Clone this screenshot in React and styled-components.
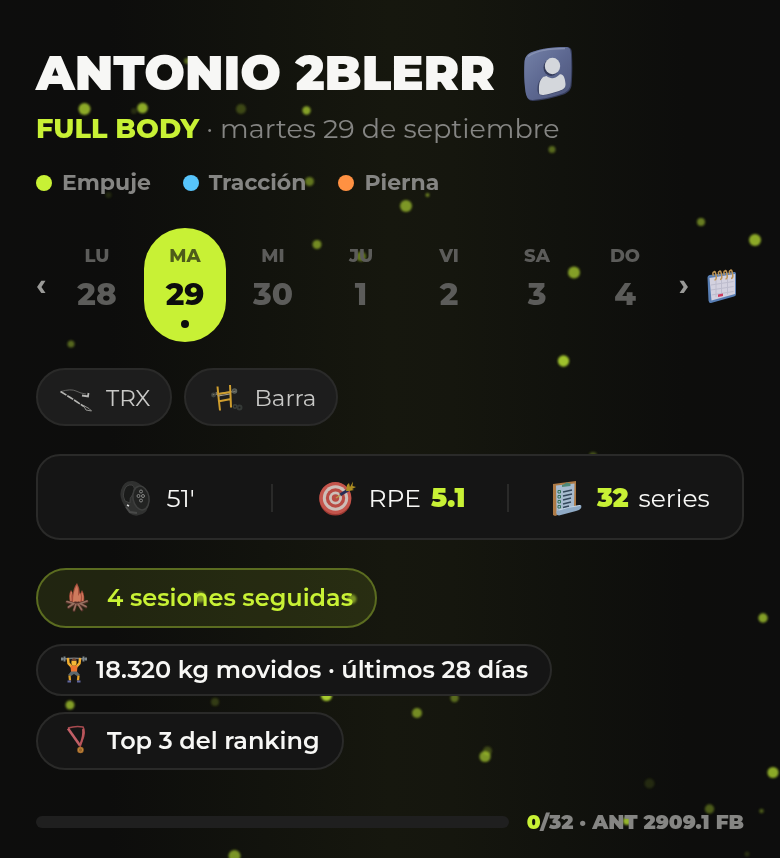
import React from "react";
import styled, { createGlobalStyle, css } from "styled-components";

const LIME = "#c8f135";

const GlobalStyle = createGlobalStyle`
  * { box-sizing: border-box; }
  html { background: #0d0d0d; }
  body {
    margin: 0;
    color: #f7f7f5;
    font-family: Montserrat, Inter, "Noto Sans", sans-serif;
  }
  h1, p, ul { margin: 0; padding: 0; }
  ul { list-style: none; }
  button { font: inherit; color: inherit; background: none; border: 0; padding: 0; cursor: pointer; }
  svg { display: block; flex: none; overflow: visible; }
`;

const Page = styled.main`
  position: relative;
  display: flex;
  flex-direction: column;
  min-height: 100vh;
  padding: 44px 36px 24px;
  overflow: hidden;
  background: linear-gradient(90deg, #0d0d0d 0%, #0d0d0c 14%, #12130d 34%, #16170e 50%, #15160e 58%, #11120d 72%, #0d0d0c 88%, #0d0d0d 100%);
`;

const Particles = styled.svg`
  position: absolute;
  inset: 0;
  width: 100%;
  height: 100%;
  pointer-events: none;
`;

const Content = styled.div`
  position: relative;
  display: flex;
  flex-direction: column;
`;

const TitleRow = styled.header`
  display: flex;
  align-items: center;
  gap: 26px;
  height: 58px;
`;

const Title = styled.h1`
  font-size: 48px;
  line-height: 58px;
  font-weight: 900;
  white-space: nowrap;
`;

const Subtitle = styled.p`
  margin-top: 8px;
  font-size: 27px;
  line-height: 38px;
  font-weight: 400;
  color: #858583;
`;

const SessionName = styled.strong`
  font-weight: 800;
  color: ${LIME};
`;

const Legend = styled.ul`
  display: flex;
  gap: 32px;
  margin-top: 20px;
`;

const LegendItem = styled.li`
  display: flex;
  align-items: center;
  gap: 10px;
  font-size: 22px;
  line-height: 30px;
  font-weight: 700;
  color: #858583;
  &::before {
    content: "";
    width: 16px;
    height: 16px;
    border-radius: 50%;
    background: ${(p) => p.$color};
  }
`;

const WeekRow = styled.nav`
  display: flex;
  align-items: center;
  margin-top: 30px;
`;

const Arrow = styled.button`
  width: 20px;
  height: 40px;
  font-size: 30px;
  line-height: 36px;
  font-weight: 700;
  text-align: ${(p) => p.$align};
  color: #999997;
`;

const Days = styled.div`
  flex: 1;
  display: grid;
  grid-template-columns: repeat(7, 1fr);
  gap: 6px;
  margin-right: 8px;
`;

const Day = styled.button`
  display: flex;
  flex-direction: column;
  align-items: center;
  height: 114px;
  padding-top: 16px;
  border-radius: 41px;
  color: #5c5c5a;
  ${(p) => p.$active && css`
    background: ${LIME};
    color: #0d0d0d;
    &::after {
      content: "";
      width: 8px;
      height: 8px;
      margin-top: 8px;
      border-radius: 50%;
      background: #0d0d0d;
    }
  `}
`;

const DayName = styled.span`
  font-size: 18px;
  line-height: 24px;
  font-weight: 800;
  opacity: ${(p) => (p.$active ? 0.65 : 1)};
`;

const DayNumber = styled.span`
  margin-top: 8px;
  font-size: 31px;
  line-height: 36px;
  font-weight: 800;
`;

const CalendarButton = styled.button`
  width: 40px;
  margin-left: 10px;
`;

const Equipment = styled.ul`
  display: flex;
  gap: 12px;
  margin-top: 26px;
`;

const EquipmentChip = styled.li`
  display: flex;
  align-items: center;
  gap: 12px;
  height: 58px;
  padding: 2px 20px 0;
  border: 2px solid #2a2a29;
  border-radius: 29px;
  background: #1d1d1d;
  font-size: 23px;
  color: #c9c9c7;
`;

const Stats = styled.section`
  display: flex;
  align-items: center;
  height: 86px;
  margin-top: 28px;
  padding-top: 2px;
  border: 2px solid #2a2a29;
  border-radius: 24px;
  background: #151515;
`;

const Divider = styled.span`
  width: 2px;
  height: 28px;
  background: #2a2a29;
`;

const Stat = styled.div`
  flex: 1;
  display: flex;
  align-items: center;
  justify-content: center;
  gap: 12px;
  font-size: 25px;
  line-height: 28px;
`;

const StatText = styled.span`
  display: flex;
  gap: 10px;
`;

const StatValue = styled.strong`
  font-size: 26px;
  font-weight: 900;
  color: ${LIME};
`;

const Achievements = styled.ul`
  display: flex;
  flex-direction: column;
  align-items: flex-start;
  gap: 16px;
  margin-top: 28px;
`;

const Achievement = styled.li`
  display: flex;
  align-items: center;
  gap: ${(p) => (p.$compact ? 8 : 12)}px;
  min-height: ${(p) => (p.$compact ? 52 : 58)}px;
  padding: 0 22px 2px;
  border: 2px solid #2a2a29;
  border-radius: 30px;
  background: #151515;
  font-size: 24px;
  font-weight: 600;
  ${(p) => p.$streak && css`
    min-height: 60px;
    border-color: #5b6c20;
    background: rgba(200, 241, 53, 0.11);
    color: ${LIME};
  `}
`;

const Footer = styled.footer`
  display: flex;
  align-items: center;
  gap: 18px;
  margin-top: 38px;
  font-size: 20px;
  line-height: 28px;
  font-weight: 900;
  color: #858583;
  white-space: nowrap;
`;

const Progress = styled.progress`
  flex: 1;
  min-width: 0;
  height: 12px;
  appearance: none;
  border: 0;
  border-radius: 6px;
  overflow: hidden;
  background: #1f1f1f;
  &::-webkit-progress-bar { background: #1f1f1f; }
  &::-webkit-progress-value { background: ${LIME}; }
`;

const Count = styled.strong`
  font-weight: 900;
  color: ${LIME};
`;

const particles = [
  [84.5, 109, 6, 0.7], [142.5, 108, 5.3, 0.7], [134, 111, 3, 0.15], [241, 109, 5, 0.25],
  [306.5, 110.5, 4.2, 0.65], [187, 61, 3, 0.4], [552, 149.5, 3.5, 0.4], [309.5, 181.5, 4.5, 0.45],
  [108.5, 195, 3, 0.12], [427.5, 195, 2, 0.5], [406, 206, 6, 0.6], [317, 244.5, 4.5, 0.55],
  [361, 256.5, 5, 0.45], [574, 272.5, 6, 0.65], [701, 222, 4, 0.5], [755, 240, 6, 0.7],
  [71, 344, 3.5, 0.4], [563.5, 361, 5.7, 0.8], [593, 456, 4, 0.3], [200, 597, 5.5, 0.6],
  [352, 599, 4.5, 0.55], [763, 618, 4.7, 0.65], [326.5, 695.5, 5.5, 0.85], [454.5, 698, 4.2, 0.4],
  [417, 713, 5, 0.55], [215, 702, 4, 0.2], [70, 705, 4.5, 0.65], [487.5, 751, 4.5, 0.25],
  [485, 756.5, 5.6, 0.6], [649.5, 783.5, 5, 0.12], [773, 772.5, 5.6, 0.7], [709.5, 809, 4.7, 0.35],
  [761.5, 811, 2.3, 0.35], [627, 821, 4, 0.75], [234.5, 856, 6, 0.6], [747, 854, 2.5, 0.15],
];

function AvatarIcon() {
  return (
    <svg width="56" height="60" viewBox="0 0 56 60" aria-hidden="true">
      <defs>
        <linearGradient id="avatarFace" x1="0" y1="0" x2="1" y2="1">
          <stop offset="0" stopColor="#7582a8" />
          <stop offset="0.5" stopColor="#5d6891" />
          <stop offset="1" stopColor="#4c5479" />
        </linearGradient>
      </defs>
      <path d="M3.500 19C4 14 6 11 11 9C22 5 34 4 45 4C50 4 51 6.500 51 11C51.500 22 51.500 34 50.500 43C49.500 48 46 50.500 41 52C31 55.500 20 57.500 12 58C7.500 58 6 55 5 50C3 39 3 28 3.500 19Z" fill="#343b5a" />
      <path d="M3.500 19C4 14 6 11 11 9C22 5 34 4 44.500 4C49 4 49.500 6.500 50 11C50.500 22 50.500 33 49.500 42C48.500 47 45 49.500 40 51C30 54.500 20 56.500 11.500 57C7 57 5.500 54 4.500 49C3 38 3 28 3.500 19Z" fill="url(#avatarFace)" />
      <path d="M7 13.500C15 7.500 30 5.500 44 5.500" fill="none" stroke="#929bbb" strokeWidth="1.500" opacity=".7" />
      <ellipse cx="30" cy="24.500" rx="7.500" ry="8.500" fill="#343b5a" />
      <path d="M16.500 48C16 40 19 34 25 33.500C29 37 34 36 37.500 32C41 31 43 36 44 43C44 46 42 47 37 49C30 51 21 54 17.500 51Z" fill="#3e4666" />
      <ellipse cx="31.500" cy="23" rx="7.700" ry="8.300" fill="#d4d7dc" />
      <path d="M18 48C17.500 39 20 33.500 25.500 33C30 36.500 34.500 35.500 38.500 31.500C42 30.500 44 34 44.500 41C44.500 45 43 46 38 48C31 50 23 53 19 51.500C18 51 18 49.500 18 48Z" fill="#d4d7dc" />
    </svg>
  );
}

function CalendarIcon() {
  return (
    <svg width="36" height="38" viewBox="0 0 36 38" aria-hidden="true">
      <path d="M3.500 11.500Q3.500 9.500 5.500 9L30 6Q32 5.500 32 8V28Q32 30 30 30.500L7 37Q5 37.500 4.500 34.500Z" fill="#587eb4" />
      <path d="M5.500 12L31 8V28L7.500 34.500Z" fill="#d3d1df" />
      <path d="M7 19L29.500 15.500M7 24L29.500 20.500M7.500 29L29.500 25.500M12 14V31M17.500 14V30.500M23.500 13V28.500" stroke="#bdbccd" strokeWidth="1" />
      <path d="M14 28.500L19 27.500V30L14 31Z" fill="#cf3b5d" />
      <g fill="none" stroke="#bd9455" strokeWidth="1.500">
        <path d="M10.500 14Q13 14 12 9T10 6Q8 6 9.500 10" />
        <path d="M16 13.500Q18.500 13.500 17.500 8.500T15.500 5.500Q13.500 5.500 15 9.500" />
        <path d="M21.500 13Q24 13 23 8T21 5Q19 5 20.500 9" />
        <path d="M27 12.500Q29.500 12.500 28.500 7.500T26.500 4.500Q24.500 4.500 26 8.500" />
      </g>
    </svg>
  );
}

function StrapIcon() {
  return (
    <svg width="36" height="28" viewBox="0 0 36 28" fill="none" aria-hidden="true">
      <path d="M3 7.500Q13 4.500 18 7T28 10" stroke="#626260" strokeWidth="1" />
      <path d="M2.500 7.500L13 14L26 22.500" stroke="#b5b5b2" strokeWidth="1.600" strokeDasharray="7 1" />
      <path d="M30.500 9L30 12.500L24 11.500" stroke="#b7b7b5" strokeWidth="1.800" />
      <path d="M25.500 21.500L28 26L33.500 27L31 24.500L25.500 21.500" stroke="#959592" strokeWidth="1" />
    </svg>
  );
}

function BarIcon() {
  return (
    <svg width="36" height="30" viewBox="-1 0 36 30" fill="none" aria-hidden="true">
      <path d="M5 12L29 8M9 9L12 14" stroke="#7b776b" strokeWidth="1.300" />
      <circle cx="6.500" cy="12" r="1.700" stroke="#3f4541" strokeWidth="1.500" />
      <circle cx="27.500" cy="8" r="2" stroke="#59605b" strokeWidth="1.500" />
      <path d="M10.500 3.500L11.500 14L13 27.500M23 2L23.500 12L24 24.500M11 18.500L24 16M11 11L24 9" stroke="#cf9e2e" strokeWidth="2" />
      <path d="M11 13L23 11" stroke="#a7a294" strokeWidth="1" />
      <circle cx="28" cy="23.500" r="1.700" stroke="#3c413d" strokeWidth="1.500" />
      <circle cx="32.500" cy="24.500" r="2" stroke="#353a37" strokeWidth="2" />
    </svg>
  );
}

function WatchIcon() {
  return (
    <svg width="40" height="40" viewBox="-2 0 40 40" aria-hidden="true">
      <path d="M4 12Q7 2 16 3Q22 4 27 10L31 18Q33 24 31 28Q30 36 22 37Q18 39 12 35L7 27Q2 19 4 12Z" fill="#303130" />
      <path d="M7 13Q9 6 15 7Q19 9 16 16Q12 20 13 25L8 23Q5 18 7 13Z" fill="#1a1b1a" stroke="#404140" />
      <ellipse cx="24" cy="20" rx="8" ry="12" transform="rotate(-10 24 20)" fill="#222322" stroke="#3e3f3e" strokeWidth="1.500" />
      <g fill="none" stroke="#858684" strokeWidth="1">
        <circle cx="24" cy="13.500" r="1.500" /><circle cx="21.500" cy="18" r="1.500" /><circle cx="26" cy="18" r="1.500" /><circle cx="24" cy="22.500" r="1.500" />
      </g>
      <path d="M9 29L13 34L20 35" fill="none" stroke="#494a49" strokeWidth="2" />
      <path d="M10 27L12 28" stroke="#ddd" strokeWidth="1.500" />
    </svg>
  );
}

function TargetIcon() {
  return (
    <svg width="42" height="36" viewBox="-4 0 42 36" aria-hidden="true">
      <ellipse cx="16.300" cy="19" rx="16" ry="16.500" fill="#9d3932" />
      <ellipse cx="16.300" cy="18" rx="16" ry="16" fill="#c4554c" />
      <circle cx="16.500" cy="18" r="12.700" fill="#cdbeb8" />
      <circle cx="16.500" cy="18" r="9.700" fill="#b94b44" />
      <circle cx="16.500" cy="18" r="6.500" fill="#cdbeb8" />
      <circle cx="16.500" cy="18" r="3.700" fill="#b94b44" />
      <path d="M21 15L30 9.500" stroke="#262d55" strokeWidth="3" />
      <path d="M17 18L21.500 15" stroke="#ba9a4b" strokeWidth="1.500" />
      <path d="M27 11L28 5L30 3L31 7L34 1.500L33.500 6L37 7L33 9L35 10L30 11Z" fill="#ad8d22" />
    </svg>
  );
}

function ClipboardIcon() {
  return (
    <svg width="44" height="38" viewBox="-8 0 44 38" aria-hidden="true">
      <path d="M4 5L27 2V29L6 37L4 36Z" fill="#ae7a45" />
      <path d="M7 6.500L25.500 4.500L25 29L7.500 34Z" fill="#a7bbcf" />
      <path d="M8 32Q17 28 32 26Q34 30 27 32L10 36.500Q6 36 8 32Z" fill="#8faac5" />
      <path d="M10 31Q18 28 31 26.500" fill="none" stroke="#c6d6e5" />
      <path d="M13 6L15.500 5Q17.500 2.500 19.500 4L21.500 4.500V7L13 8Z" fill="#4e8978" />
      <path d="M14 13L23 11M14 17L23 15M14 21L22 19M14 25L22 23M14 28.500L20 27" stroke="#34475c" strokeWidth="1.500" />
      <path d="M9 11.500H11.500V14H9ZM9 16.500H11.500V19H9ZM9 21.500H11.500V24H9ZM9 26.500H11.500V29H9Z" fill="none" stroke="#36735a" strokeWidth="1" />
    </svg>
  );
}

function CampfireIcon() {
  return (
    <svg width="35" height="32" viewBox="0 0 35 32" aria-hidden="true">
      <path d="M10 21Q8 14 11 9Q13 11 13 14Q13 7 17 2Q20 7 20 13L22 9Q25 14 24 21L17 25Z" fill="#a64e3c" />
      <path d="M13 21Q13 10 17 4Q19 9 18 15L20 12Q22 16 20 21L17 24Z" fill="#cf7b5d" />
      <path d="M11 20Q10 15 11.500 11M22.500 20Q23.500 16 22 12" fill="none" stroke="#cf7b5d" strokeWidth="1.300" />
      <g strokeLinecap="round">
        <path d="M7 21L15 23M27 20.500L19 23M8.500 26.500L15 22M26 26L19 22M14 29.500L16 22M22 29L18 22" stroke="#4f2e27" strokeWidth="3" />
        <path d="M7 20.500L14 22.500M27 20L20 22.500M8.500 26L14 22.500M26 25.500L20 22.500M14 29L16 23M21.500 28.500L18 23" stroke="#987060" strokeWidth="1.700" />
      </g>
    </svg>
  );
}

function LifterIcon() {
  return (
    <svg width="28" height="28" viewBox="-1 -1 28 28" aria-hidden="true">
      <path d="M2 3Q13 1.500 24 3" fill="none" stroke="#75797d" strokeWidth="1.300" />
      <path d="M1 1.500V4.500M3.500 0.500V5.500M22.500 0.500V5.500M25 1.500V4.500" stroke="#7e898e" strokeWidth="2" />
      <path d="M7 3L7.500 7.500L11 11M19 3L18.500 7.500L15 11" fill="none" stroke="#f0ad2e" strokeWidth="2.500" strokeLinecap="round" />
      <path d="M9.500 9.500L16.500 9.500L16 16H10Z" fill="#ee7430" />
      <ellipse cx="13" cy="6.500" rx="2.600" ry="3.200" fill="#f6b837" />
      <path d="M10.500 5Q11 1.500 14 2.500Q16 3 15.500 5Z" fill="#77472d" />
      <path d="M10 15.500H16L19 19L16 20L13 18L10 20L7 19Z" fill="#5b686e" />
      <path d="M8.500 19.500L9 24.500M17.500 19.500L17 24.500" stroke="#e2a32b" strokeWidth="2.300" />
      <path d="M6.500 25.500H10M16 25.500H19.500" stroke="#6067a0" strokeWidth="1.800" />
    </svg>
  );
}

function MedalIcon() {
  return (
    <svg width="35" height="32" viewBox="0 0 35 32" fill="none" aria-hidden="true">
      <path d="M8 4Q16 1.500 23 3Q26 8 22 17L20 23" stroke="#a84a4f" strokeWidth="1.600" />
      <path d="M8 4.500L20 21.500" stroke="#c25f66" strokeWidth="2.600" />
      <path d="M23 5Q24 11 20.500 20" stroke="#b9565c" strokeWidth="2" />
      <circle cx="20.500" cy="26" r="3.300" fill="#9a6329" />
      <circle cx="20.500" cy="26" r="2.200" stroke="#bf8539" />
    </svg>
  );
}

const legend = [["Empuje", LIME], ["Tracción", "#57c4fb"], ["Pierna", "#ff9142"]];
const week = [["LU", 28], ["MA", 29], ["MI", 30], ["JU", 1], ["VI", 2], ["SA", 3], ["DO", 4]];

export default function App() {
  return (
    <Page>
      <GlobalStyle />
      <Particles aria-hidden="true">
        <defs>
          <filter id="soften"><feGaussianBlur stdDeviation="0.8" /></filter>
        </defs>
        <g fill="#c3ed35" filter="url(#soften)">
          {particles.map(([x, y, r, o]) => <circle key={`${x}-${y}`} cx={x} cy={y} r={r} opacity={o} />)}
        </g>
      </Particles>
      <Content>
        <TitleRow>
          <Title>ANTONIO 2BLERR</Title>
          <button aria-label="Perfil"><AvatarIcon /></button>
        </TitleRow>
        <Subtitle>
          <SessionName>FULL BODY</SessionName> · martes 29 de septiembre
        </Subtitle>
        <Legend>
          {legend.map(([name, color]) => <LegendItem key={name} $color={color}>{name}</LegendItem>)}
        </Legend>
        <WeekRow aria-label="Semana">
          <Arrow $align="left" aria-label="Semana anterior">‹</Arrow>
          <Days>
            {week.map(([name, number]) => {
              const active = number === 29;
              return (
                <Day key={name} $active={active} aria-pressed={active}>
                  <DayName $active={active}>{name}</DayName>
                  <DayNumber>{number}</DayNumber>
                </Day>
              );
            })}
          </Days>
          <Arrow $align="center" aria-label="Semana siguiente">›</Arrow>
          <CalendarButton aria-label="Calendario"><CalendarIcon /></CalendarButton>
        </WeekRow>
        <Equipment>
          <EquipmentChip><StrapIcon />TRX</EquipmentChip>
          <EquipmentChip><BarIcon />Barra</EquipmentChip>
        </Equipment>
        <Stats>
          <Stat><WatchIcon /><StatText>51'</StatText></Stat>
          <Divider />
          <Stat><TargetIcon /><StatText>RPE <StatValue>5.1</StatValue></StatText></Stat>
          <Divider />
          <Stat><ClipboardIcon /><StatText><StatValue>32</StatValue> series</StatText></Stat>
        </Stats>
        <Achievements>
          <Achievement $streak><CampfireIcon />4 sesiones seguidas</Achievement>
          <Achievement $compact><LifterIcon />18.320 kg movidos · últimos 28 días</Achievement>
          <Achievement><MedalIcon />Top 3 del ranking</Achievement>
        </Achievements>
        <Footer>
          <Progress value="0" max="32" aria-label="Series completadas" />
          <span><Count>0</Count>/32 · ANT 2909.1 FB</span>
        </Footer>
      </Content>
    </Page>
  );
}
